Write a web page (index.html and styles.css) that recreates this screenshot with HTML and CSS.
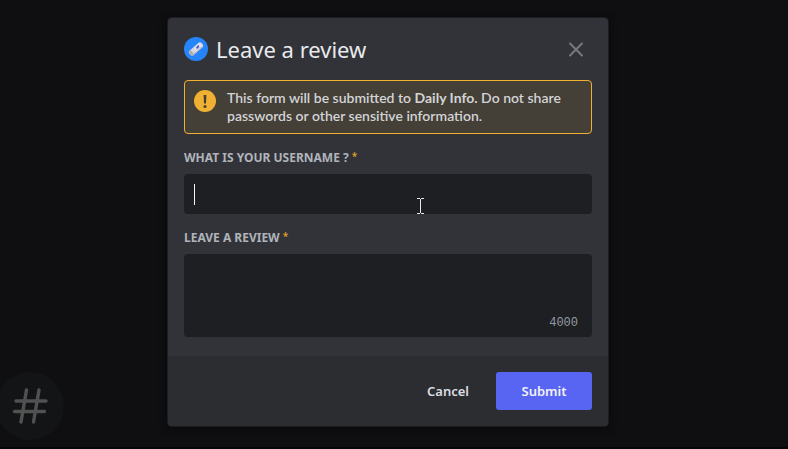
FILE: index.html
```html
<!DOCTYPE html>
<html lang="en">
<head>
<meta charset="utf-8">
<meta name="viewport" content="width=device-width, initial-scale=1">
<title>Leave a review</title>
<link rel="stylesheet" href="styles.css">
</head>
<body>
<div class="channel-badge" aria-hidden="true">
  <svg width="68" height="68" viewBox="0 0 68 68" fill="none" stroke="#505151" stroke-width="3.4" stroke-linecap="round">
    <path d="M30.500 18 25 50M43 18 37.500 50M20 29H50M18.500 39.500H48.500"/>
  </svg>
</div>
<main class="backdrop">
  <form class="modal" role="dialog" aria-labelledby="title">
    <div class="body">
      <header class="header">
        <svg class="app-icon" width="24" height="24" viewBox="0 0 24 24" aria-hidden="true">
          <circle cx="12" cy="12" r="12" fill="#2684fb"/>
          <g transform="rotate(-41 12 12)">
            <rect x="4" y="9" width="16" height="6" rx="2" fill="#dedfe5"/>
            <path d="M4.500 14.500Q4 9 6 9H7V15H6Z" fill="#a9a9b0"/>
            <path d="M7 14.500H19" stroke="#b6b5bd"/>
            <path d="M8 9V14M10 9V12" stroke="#bcbcc4" stroke-width=".7"/>
            <path d="M13 10.500H17L15.500 13H12.500Z" fill="#7b8ce6"/>
            <path d="M13.500 11.500H16" stroke="#344fca"/>
          </g>
        </svg>
        <h1 class="title" id="title">Leave a review</h1>
        <button class="close" type="button" aria-label="Close">
          <svg width="16" height="16" viewBox="0 0 16 16" fill="none" stroke="#747a80" stroke-width="2" stroke-linecap="round"><path d="M2 2.500 14 14.500M14 2.500 2 14.500"/></svg>
        </button>
      </header>
      <div class="notice">
        <svg class="notice-icon" width="22" height="22" viewBox="0 0 22 22" aria-hidden="true">
          <circle cx="11" cy="11" r="11" fill="#f0b132"/>
          <path d="M9.600 5H12.400L12 13.500H10Z" fill="#463f36"/>
          <circle cx="11" cy="16.500" r="1.500" fill="#463f36"/>
        </svg>
        <p class="notice-text">This form will be submitted to <strong>Daily Info.</strong> Do not share passwords or other sensitive information.</p>
      </div>
      <div class="field">
        <label class="label" for="username">What is your username ? <span class="required">*</span></label>
        <div class="control">
          <input class="input" id="username" type="text" required>
          <span class="caret"></span>
          <svg class="pointer" width="7" height="16" viewBox="0 0 7 16" fill="none" stroke="#e6e7e8" shape-rendering="crispEdges" aria-hidden="true"><path d="M0 .5H3M4 .5H7M3.500 1V15M0 15.500H3M4 15.500H7"/></svg>
        </div>
      </div>
      <div class="field">
        <label class="label" for="review">Leave a review <span class="required">*</span></label>
        <div class="control">
          <textarea class="input textarea" id="review" maxlength="4000" required></textarea>
          <span class="count">4000</span>
        </div>
      </div>
    </div>
    <footer class="footer">
      <button class="button" type="button">Cancel</button>
      <button class="button primary" type="submit">Submit</button>
    </footer>
  </form>
</main>
</body>
</html>
```
FILE: styles.css
```css
* { box-sizing: border-box; }

body {
  margin: 0;
  min-height: 100vh;
  background: #0f0f11;
  border-bottom: 2px solid #080708;
  color: #dbdee1;
  font-family: "Noto Sans", sans-serif;
  font-size: 14px;
}

.backdrop {
  display: flex;
  justify-content: center;
  padding: 18px 28px 18px 16px;
}

.channel-badge {
  position: absolute;
  left: -4px;
  bottom: 9px;
  width: 68px;
  height: 68px;
  border-radius: 50%;
  background: #131416;
}

.modal {
  position: relative;
  width: 100%;
  max-width: 440px;
  border-radius: 4px;
  background: #313338;
  box-shadow: 0 0 0 1px #1c1d20, 0 2px 8px #08080a;
  overflow: hidden;
}

.body { padding: 16px 16px 19px; }

.header {
  display: flex;
  align-items: center;
  gap: 8px;
  height: 30px;
}

.title {
  flex: 1;
  margin: 0;
  color: #e9eaed;
  font-size: 22px;
  font-weight: 400;
  line-height: 30px;
}

.close {
  display: flex;
  padding: 8px;
  border: 0;
  background: none;
}

.notice {
  display: flex;
  gap: 10px;
  margin-top: 16px;
  padding: 8px;
  border: 1px solid #f0b132;
  border-radius: 4px;
  background: #443f37;
}

.notice-icon {
  flex: none;
  margin: 1px;
}

.notice-text {
  margin: 0;
  color: #d2d4d6;
  font-family: Lato, sans-serif;
  font-size: 14px;
  font-weight: 600;
  line-height: 18px;
}

strong { font-weight: 700; }

.field { margin-top: 16px; }

.label {
  display: block;
  margin-bottom: 8px;
  color: #b0b4ba;
  font-size: 12px;
  font-weight: 700;
  line-height: 16px;
  text-transform: uppercase;
}

.required {
  color: #e5a62f;
  font-size: 10px;
  font-weight: 500;
  line-height: 8px;
  vertical-align: 2px;
}

.control { position: relative; }

.input {
  display: block;
  width: 100%;
  height: 40px;
  padding: 10px;
  border: 0;
  border-radius: 4px;
  outline: 0;
  background: #1e1f22;
  color: #dbdee1;
  font: inherit;
}

.textarea {
  height: 83px;
  resize: none;
}

.caret {
  position: absolute;
  top: 10px;
  left: 10px;
  width: 1px;
  height: 21px;
  background: #f2f3f5;
}

.pointer {
  position: absolute;
  top: 24px;
  left: 233px;
}

.count {
  position: absolute;
  right: 14px;
  bottom: 7px;
  color: #949ba4;
  font-family: "Liberation Mono", monospace;
  font-size: 12px;
  line-height: 14px;
}

.footer {
  display: flex;
  justify-content: flex-end;
  padding: 16px;
  background: #2b2d31;
}

.button {
  min-width: 96px;
  height: 38px;
  border: 0;
  border-radius: 3px;
  background: none;
  color: #dbdee1;
  font: 600 13px/16px "Noto Sans", sans-serif;
}

.primary {
  background: #5865f2;
  color: #f2f3f5;
}
```
